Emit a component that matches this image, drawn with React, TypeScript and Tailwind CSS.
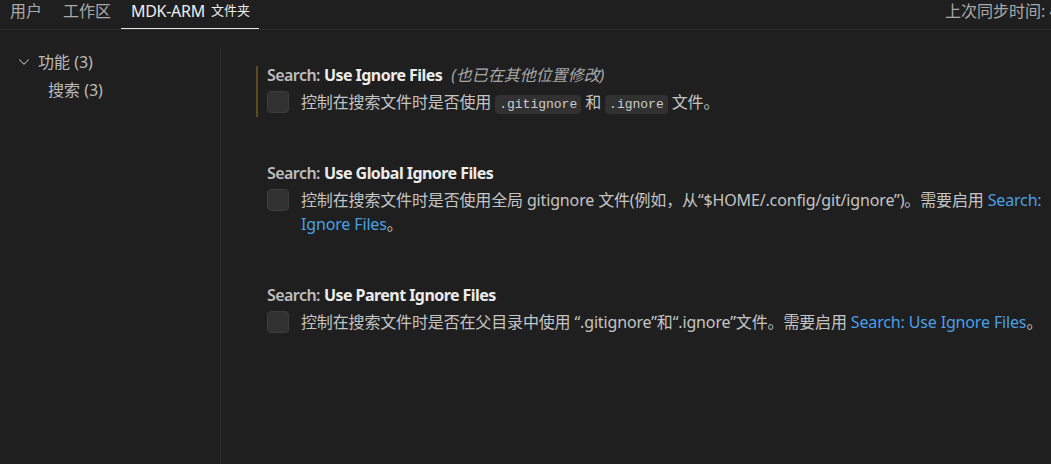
import { ChevronDown } from 'lucide-react'

const font = { fontFamily: '"Noto Sans", "Noto Sans CJK SC", sans-serif' }

function Code({ children }: { children: string }) {
  return (
    <code className="mx-[4px] rounded-[4px] bg-[#313131] px-[4px] py-[2px] font-['Liberation_Mono',monospace] text-[13px] leading-[16px] tracking-normal text-[#cccccc]">
      {children}
    </code>
  )
}

function Link({ children }: { children: string }) {
  return <span className="text-[#4a9fe6]">{children}</span>
}

function Setting({
  name,
  modified,
  children,
}: {
  name: string
  modified?: boolean
  children: React.ReactNode
}) {
  return (
    <div className="flex">
      <div className={`w-[2px] shrink-0 ${modified ? 'bg-[#5e4a1d]' : ''}`} />
      <div className="pl-[9px] pb-[3px]">
        <div className="flex items-center whitespace-nowrap text-[16px] leading-[18px] tracking-[-0.55px]">
          <span className="font-semibold text-[#bdbdbd]">Search:</span>
          <span className="ml-[4px] font-bold text-[#ececec]">{name}</span>
          {modified && (
            <span className="ml-[9px] italic text-[#a8a8a8] tracking-normal">(也已在其他位置修改)</span>
          )}
        </div>
        <div className="mt-[6px] flex gap-[12px]">
          <div className="mt-[1px] h-[22px] w-[22px] shrink-0 rounded-[4px] border border-[#3c3c3c] bg-[#313131]" />
          <div className="whitespace-nowrap text-[16px] leading-[24px] tracking-[-0.15px] text-[#c4c4c4]">{children}</div>
        </div>
      </div>
    </div>
  )
}

export default function App() {
  return (
    <div className="flex h-[464px] w-[1051px] flex-col overflow-hidden bg-[#1f1f1f]" style={font}>
      {/* tabs */}
      <div className="flex h-[30px] shrink-0 border-b border-[#2b2b2b] text-[16px] leading-[22px]">
        <div className="h-[29px] px-[10px] text-[#a9a9a9]">用户</div>
        <div className="ml-[1px] h-[29px] px-[10px] text-[#a9a9a9]">工作区</div>
        <div className="flex h-[29px] items-start border-b border-[#e6e6e6] pl-[10px] pr-[9px] text-[#eeeeee]">
          <span className="tracking-[-0.3px]">MDK-ARM</span>
          <span className="ml-[6px] text-[13px] leading-[20px]">文件夹</span>
        </div>
        <div className="ml-auto w-[106px] shrink-0 overflow-hidden whitespace-nowrap text-[#a9a9a9]">
          上次同步时间: 4 分钟前
        </div>
      </div>

      <div className="flex flex-1">
        {/* toc */}
        <div className="w-[220px] shrink-0 pt-[18px] text-[16px] text-[#bbbbbb]">
          <div className="flex h-[28px] items-center pl-[15px]">
            <ChevronDown size={18} strokeWidth={1.4} className="text-[#bbbbbb]" />
            <span className="ml-[5px]">功能 (3)</span>
          </div>
          <div className="flex h-[28px] items-center pl-[48px]">搜索 (3)</div>
        </div>
        <div className="mt-[18px] w-px shrink-0 bg-[#2b2b2b]" />

        {/* settings */}
        <div className="flex flex-col gap-[47px] pl-[35px] pt-[36px]">
          <Setting name="Use Ignore Files" modified>
            控制在搜索文件时是否使用<Code>.gitignore</Code>和<Code>.ignore</Code>文件。
          </Setting>
          <Setting name="Use Global Ignore Files">
            控制在搜索文件时是否使用全局 gitignore 文件(例如，从“$HOME/.config/git/ignore”)。需要启用 <Link>Search:</Link>
            <br />
            <Link>Ignore Files</Link>。
          </Setting>
          <Setting name="Use Parent Ignore Files">
            控制在搜索文件时是否在父目录中使用 “.gitignore”和“.ignore”文件。需要启用 <Link>Search: Use Ignore Files</Link>。
          </Setting>
        </div>
      </div>
    </div>
  )
}
